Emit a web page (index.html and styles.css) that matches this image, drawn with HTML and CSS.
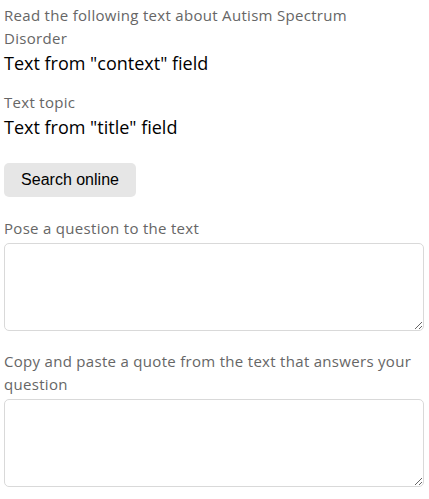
FILE: index.html
```html
<!DOCTYPE html>
<html>
<head>
<meta charset="utf-8">
<link rel="stylesheet" href="styles.css">
</head>
<body>
<div class="page">
  <div class="label intro">Read the following text about Autism Spectrum Disorder</div>
  <div class="value">Text from "context" field</div>
  <div class="label gap">Text topic</div>
  <div class="value">Text from "title" field</div>
  <button class="btn">Search online</button>
  <div class="label">Pose a question to the text</div>
  <textarea class="area"></textarea>
  <div class="label gap2">Copy and paste a quote from the text that answers your question</div>
  <textarea class="area"></textarea>
</div>
</body>
</html>
```
FILE: styles.css
```css
html, body { margin: 0; padding: 0; background: #fff; }
.page {
  padding: 4px 5px 0 4px;
  display: flex;
  flex-direction: column;
  font-family: "Open Sans", "Noto Sans", sans-serif;
}
.label {
  font-size: 15px;
  letter-spacing: 0.3px;
  line-height: 23px;
  color: #666;
}
.intro { max-width: 370px; }
.value {
  font-size: 18px;
  line-height: 26px;
  color: #000;
}
.gap { margin-top: 15px; }
.gap2 { margin-top: 19px; }
.btn {
  align-self: flex-start;
  margin: 23px 0 20px 0;
  width: 132px;
  height: 34px;
  border: none;
  border-radius: 5px;
  background: #e6e6e6;
  font-family: "Liberation Sans", Arial, sans-serif;
  font-size: 16px;
  color: #000;
  padding: 0;
}
.area {
  display: block;
  box-sizing: border-box;
  width: 420px;
  height: 88px;
  border: 1px solid #d9d9d9;
  border-radius: 5px;
  margin: 3px 0 0 0;
  resize: vertical;
}
```
